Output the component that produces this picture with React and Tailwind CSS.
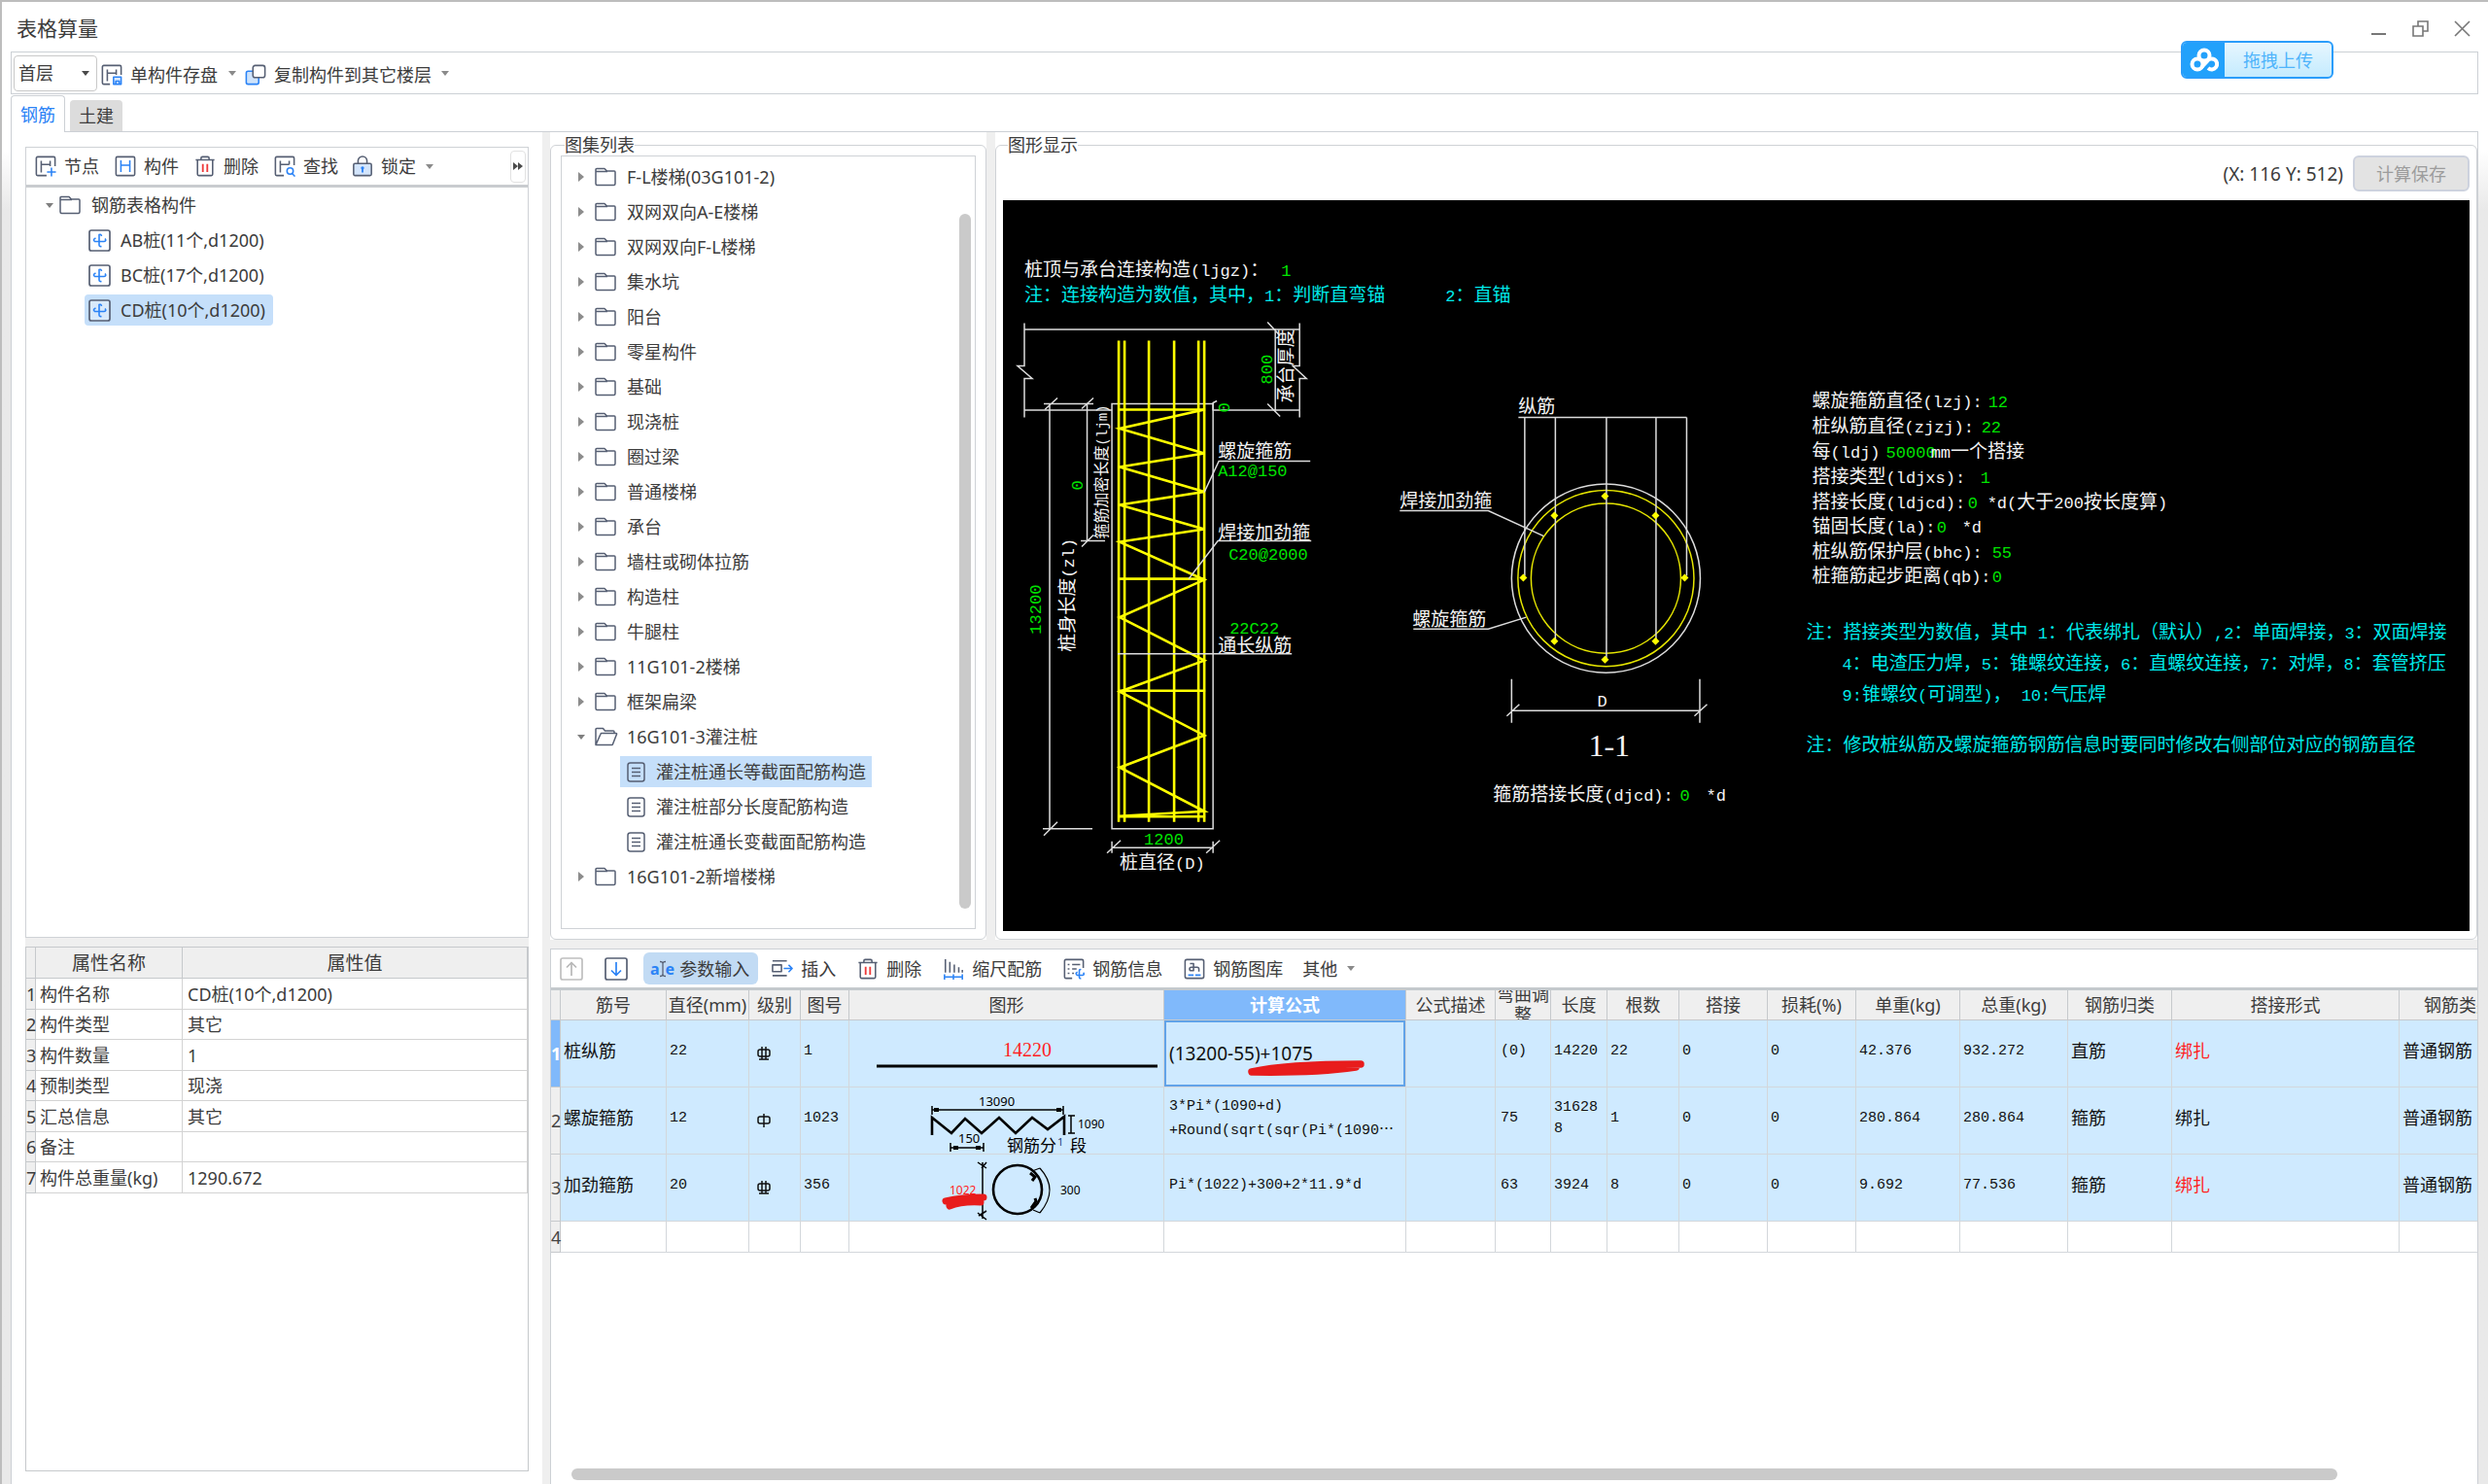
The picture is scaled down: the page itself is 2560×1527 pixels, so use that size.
import { useState } from 'react';

const SLATE = '#565f73';
const BLUE = '#2b83f6';

const atlas = [
  'F-L楼梯(03G101-2)',
  '双网双向A-E楼梯',
  '双网双向F-L楼梯',
  '集水坑',
  '阳台',
  '零星构件',
  '基础',
  '现浇桩',
  '圈过梁',
  '普通楼梯',
  '承台',
  '墙柱或砌体拉筋',
  '构造柱',
  '牛腿柱',
  '11G101-2楼梯',
  '框架扁梁',
  {
    name: '16G101-3灌注桩',
    items: ['灌注桩通长等截面配筋构造', '灌注桩部分长度配筋构造', '灌注桩通长变截面配筋构造']
  },
  '16G101-2新增楼梯'
];

const components = ['AB桩(11个,d1200)', 'BC桩(17个,d1200)', 'CD桩(10个,d1200)'];

const properties = [
  ['构件名称', 'CD桩(10个,d1200)'],
  ['构件类型', '其它'],
  ['构件数量', '1'],
  ['预制类型', '现浇'],
  ['汇总信息', '其它'],
  ['备注', ''],
  ['构件总重量(kg)', '1290.672']
];

const columns = [
  ['', 10],
  ['筋号', 109],
  ['直径(mm)', 85],
  ['级别', 53],
  ['图号', 50],
  ['图形', 324],
  ['计算公式', 249],
  ['公式描述', 92],
  ['弯曲调整', 57],
  ['长度', 58],
  ['根数', 74],
  ['搭接', 91],
  ['损耗(%)', 91],
  ['单重(kg)', 107],
  ['总重(kg)', 111],
  ['钢筋归类', 107],
  ['搭接形式', 234],
  ['钢筋类别', 123]
];

const bars = [
  {
    name: '桩纵筋', dia: '22', grade: 'C', shape: '1', bend: '(0)', length: '14220', count: '22',
    unit: '42.376', total: '932.272', kind: '直筋', lapRed: true
  },
  {
    name: '螺旋箍筋', dia: '12', grade: 'A', shape: '1023', bend: '75', length: '316288', count: '1',
    unit: '280.864', total: '280.864', kind: '箍筋', lapRed: false
  },
  {
    name: '加劲箍筋', dia: '20', grade: 'C', shape: '356', bend: '63', length: '3924', count: '8',
    unit: '9.692', total: '77.536', kind: '箍筋', lapRed: true
  }
];

function Icon({ children, w = 22, h = 22, box = '0 0 24 24' }) {
  return (
    <svg width={w} height={h} viewBox={box} fill="none" stroke={SLATE} strokeWidth="1.7" strokeLinejoin="round" className="shrink-0" aria-hidden="true">
      {children}
    </svg>
  );
}

function SaveIcon() {
  return (
    <Icon>
      <path d="M10 22.500H3a1.500 1.500 0 0 1-1.500-1.500V3A1.500 1.500 0 0 1 3 1.500h18A1.500 1.500 0 0 1 22.500 3v9" />
      <path d="M7 6v13M17 6v6M7 10h10" />
      <path d="M14 14.500h8.500v8H14z" stroke={BLUE} fill="#d6e8ff" />
      <path d="M16.500 22v-3h4v3" stroke={BLUE} />
    </Icon>
  );
}

function CopyIcon() {
  return (
    <Icon>
      <rect x="1.500" y="8" width="14" height="14.500" rx="2" stroke={BLUE} fill="#cfe3fb" />
      <rect x="9" y="1.500" width="13.500" height="13.500" rx="2.500" fill="#fff" />
    </Icon>
  );
}

function NodeIcon() {
  return (
    <Icon>
      <path d="M13 22.500H3a1.500 1.500 0 0 1-1.500-1.500V3A1.500 1.500 0 0 1 3 1.500h18A1.500 1.500 0 0 1 22.500 3v9" />
      <path d="M7 6v13M17 6v6M7 10h10" />
      <path d="M18.500 13.500v10M13.500 18.500h10" stroke={BLUE} />
    </Icon>
  );
}

function MemberIcon() {
  return (
    <Icon>
      <rect x="1.500" y="1.500" width="21" height="21" rx="1.500" />
      <path d="M7 5.500v13M17 5.500v13M7 11h10" stroke={BLUE} />
    </Icon>
  );
}

function TrashIcon() {
  return (
    <Icon>
      <path d="M1.500 5h21M7.500 5V3A1.500 1.500 0 0 1 9 1.500h6A1.500 1.500 0 0 1 16.500 3v2M3.500 5v16A1.500 1.500 0 0 0 5 22.500h14a1.500 1.500 0 0 0 1.500-1.500V5" />
      <path d="M9.500 9.500v9M14.500 9.500v9" stroke="#ee3b3b" strokeWidth="2" />
    </Icon>
  );
}

function FindIcon() {
  return (
    <Icon>
      <path d="M11 22.500H3a1.500 1.500 0 0 1-1.500-1.500V3A1.500 1.500 0 0 1 3 1.500h18A1.500 1.500 0 0 1 22.500 3v8" />
      <path d="M7 6v13M17 6v4M7 10h10" />
      <circle cx="18" cy="17.500" r="3.500" stroke={BLUE} />
      <path d="M20.500 20.500l3 3" stroke={BLUE} />
    </Icon>
  );
}

function LockIcon() {
  return (
    <Icon>
      <path d="M7 9V6a5 5 0 0 1 10 0v3" />
      <rect x="2" y="9" width="20" height="13.500" rx="1.500" fill="#d3e5fc" />
      <path d="M12 14v5" stroke={BLUE} strokeWidth="2" />
      <circle cx="12" cy="14" r="1.800" fill={BLUE} stroke="none" />
    </Icon>
  );
}

function FolderIcon() {
  return (
    <Icon w={22} h={20} box="0 0 22 20">
      <path d="M1 4V2.500A1 1 0 0 1 2 1.500h8l2.500 2.500H20a1 1 0 0 1 1 1V17a1.500 1.500 0 0 1-1.500 1.500h-17A1.500 1.500 0 0 1 1 17zM1 4.500h12" strokeWidth="1.500" />
    </Icon>
  );
}

function OpenFolderIcon() {
  return (
    <Icon w={24} h={20} box="0 0 24 20">
      <path d="M1 18V2.500a1 1 0 0 1 1-1h6.500L10.500 4H19a1 1 0 0 1 1 1v1.500M1 18.500h16.500a1 1 0 0 0 1-.7L22.500 7.500a.7.7 0 0 0-.7-1H7a1 1 0 0 0-1 .7z" strokeWidth="1.500" />
    </Icon>
  );
}

function DocIcon() {
  return (
    <Icon w={19} h={21} box="0 0 19 21">
      <rect x="1" y="1" width="17" height="19" rx="2.500" strokeWidth="1.500" />
      <path d="M5 6.500h9M5 10.500h9M5 14.500h9" strokeWidth="1.500" />
    </Icon>
  );
}

function BarIcon() {
  return (
    <Icon w={23} h={23} box="0 0 23 23">
      <rect x="1" y="1" width="21" height="21" rx="2" fill="#fff" fillOpacity=".35" />
      <path d="M13.500 7q-.5-2.500-2.500-1.500v10.500q0 2 2.500 1.500" stroke={BLUE} strokeWidth="1.600" />
      <path d="M7.500 9q-3.500 1.500-1 3.500h9.500q3-.5 1-3" stroke={BLUE} strokeWidth="1.600" />
    </Icon>
  );
}

function ArrowBoxIcon({ down }) {
  return (
    <Icon w={24} h={24}>
      <rect x="1" y="1" width="22" height="22" rx="2" stroke={down ? SLATE : '#bfbfbf'} />
      <path d={down ? 'M12 5v13M7 13.500l5 5 5-5' : 'M12 19V6M7 10.500l5-5 5 5'} stroke={down ? BLUE : '#b8b8b8'} />
    </Icon>
  );
}

function InsertIcon() {
  return (
    <Icon>
      <path d="M1 3h16M1 19.500h16M1 7.500h10v7.500H1z" />
      <path d="M13.500 11.500h9M19 7.500l4 4-4 4" stroke={BLUE} />
    </Icon>
  );
}

function ScaleIcon() {
  return (
    <Icon>
      <path d="M3 1v15M8 4v12M13 7v9M18 10v6M22 13v3" />
      <path d="M2 21h20M2 18v6M12 18v6M22 18v6" stroke={BLUE} />
    </Icon>
  );
}

function InfoIcon() {
  return (
    <Icon>
      <path d="M10 22.500H3A1.500 1.500 0 0 1 1.500 21V3A1.500 1.500 0 0 1 3 1.500h18A1.500 1.500 0 0 1 22.500 3v8" />
      <path d="M5 7h2M10 7h9M5 12h2M10 12h5M5 17h2M10 17h2" />
      <path d="M20 13q-2-1-2 1v7q0 2 2 1.500M16 15.500q-3 1.500-.5 3.500h6q3-.5 1-3" stroke={BLUE} />
    </Icon>
  );
}

function LibraryIcon() {
  return (
    <Icon>
      <rect x="1.500" y="1.500" width="21" height="21" rx="2" />
      <path d="M7 6h4v8H8.500a2 2 0 0 1 0-4H15a2 2 0 0 1 2 2v3" />
      <path d="M5 19h6M13 19h6" stroke={BLUE} strokeWidth="2" />
    </Icon>
  );
}

function Caret({ className = 'border-t-[#8a8a8a]' }) {
  return <span className={`inline-block border-x-4 border-t-5 border-x-transparent ${className}`} />;
}

function ToolButton({ icon, label, className = '' }) {
  return (
    <button type="button" className={`flex items-center gap-2 whitespace-nowrap ${className}`}>
      {icon}
      <span>{label}</span>
    </button>
  );
}

// Half-width runs are set in the monospace face, the rest in the CJK face
function CadText({ x, y, fill = '#f4f4f4', rotate, small, children }) {
  const runs = children.match(/[\x20-\x7e]+|[^\x20-\x7e]+/g);
  return (
    <text
      x={x}
      y={y}
      fill={fill}
      transform={rotate ? `rotate(-90 ${x} ${y})` : undefined}
      className={`whitespace-pre font-['Noto_Sans_CJK_SC',sans-serif] ${small ? 'text-[16px]' : 'text-[19px]'}`}
    >
      {runs.map((run, i) =>
        /^[\x20-\x7e]/.test(run) ? (
          <tspan key={i} className={`font-['Liberation_Mono',monospace] ${small ? 'text-[14px]' : 'text-[17px]'}`}>{run}</tspan>
        ) : (
          <tspan key={i}>{run}</tspan>
        )
      )}
    </text>
  );
}

const GREEN = '#00e400';
const CYAN = '#00eaea';
const YELLOW = '#ffff00';

function PileDrawing() {
  return (
    <svg viewBox="1032 207 1508 751" preserveAspectRatio="xMidYMid meet" className="min-h-0 w-full flex-1 bg-black" role="img" aria-label="图形显示">
      <CadText x={1054} y={285}>桩顶与承台连接构造(ljgz)：</CadText>
      <CadText x={1318} y={285} fill={GREEN}>1</CadText>
      <CadText x={1054} y={311} fill={CYAN}>注：连接构造为数值，其中，1：判断直弯锚</CadText>
      <CadText x={1487} y={311} fill={CYAN}>2：直锚</CadText>

      <g fill="none" stroke="#dcdcdc" strokeWidth="1.500">
        <path d="M1054 333v44h-7l15 13h-8v40M1337 333v44h-7l14 13h-7v40M1054 339.500h283M1054 422.500h90M1248 422.500h89" />
        <path d="M1312 339v84M1304 332l13 14M1304 416l13 13" />
        <path d="M1144 416h104v437h-104z" />
        <path d="M1074 416h51M1080 416v437M1073 853h51M1075 422l13-12M1074 860l14-14" />
        <path d="M1118.500 416v141M1112 557h25M1113 421l12-11M1113 563l12-12M1248 423v-8l4-2" />
        <path d="M1144 872.500h104M1144 866v12M1248 866v12M1139 878l14-13M1241 878l14-13" />
      </g>

      <g fill="none" stroke={YELLOW} strokeWidth="2.600">
        <path d="M1151 351v495M1157 351v495M1182 351v495M1208 351v495M1233 351v495M1239 351v495" />
        <path d="M1150 422h90M1150 596h90M1150 711h90M1150 840.500h90" />
        <path d="M1239 422L1152 441.500 1239 467 1152 481 1239 506.500 1152 520 1239 545 1152 558 1239 597 1152 635.500 1239 680 1152 712 1239 757 1152 790 1239 835 1152 840" />
      </g>

      <g fill="none" stroke="#dcdcdc" strokeWidth="1.500">
        <path d="M1348 475h-94l-15 32M1349 557h-96l-30 39M1150 673h179" />
      </g>

      <CadText x={1309} y={396} fill={GREEN} rotate>800</CadText>
      <CadText x={1330} y={415} rotate>承台厚度</CadText>
      <CadText x={1114} y={505} fill={GREEN} rotate>0</CadText>
      <CadText x={1139} y={555} rotate small>箍筋加密长度(ljm)</CadText>
      <CadText x={1105} y={671} rotate>桩身长度(zl)</CadText>
      <CadText x={1071} y={653} fill={GREEN} rotate>13200</CadText>
      <CadText x={1265} y={425} fill={GREEN} rotate>0</CadText>
      <CadText x={1253} y={471}>螺旋箍筋</CadText>
      <CadText x={1253} y={490} fill={GREEN}>A12@150</CadText>
      <CadText x={1253} y={555}>焊接加劲箍</CadText>
      <CadText x={1264} y={576} fill={GREEN}>C20@2000</CadText>
      <CadText x={1265} y={652} fill={GREEN}>22C22</CadText>
      <CadText x={1253} y={671}>通长纵筋</CadText>
      <CadText x={1177} y={869} fill={GREEN}>1200</CadText>
      <CadText x={1152} y={894}>桩直径(D)</CadText>

      <g fill="none" strokeWidth="1.500">
        <circle cx="1652" cy="595.500" r="97" stroke="#dcdcdc" />
        <circle cx="1652" cy="595.500" r="90.500" stroke="#e6e600" />
        <circle cx="1652" cy="595.500" r="77" stroke="#e6e600" />
        <path
          d="M1562 430h173M1568.500 430v163M1600 430v229M1652.500 430v248M1703.500 430v229M1735 430v163M1440 526h91l57 26M1454 647.500h77l39-12"
          stroke="#dcdcdc"
        />
        <path d="M1555 699v45M1748.500 699v45M1555 731.500h193M1550 737l13-12M1743 737l13-12" stroke="#dcdcdc" />
      </g>
      <g fill={YELLOW}>
        {[[1651, 511], [1599, 531], [1703, 531], [1567, 595], [1733, 595], [1599, 660], [1703, 660], [1651, 679]].map(([x, y]) => (
          <path key={`${x}-${y}`} d={`M${x - 4} ${y}l4-4 4 4-4 4z`} />
        ))}
      </g>
      <CadText x={1562} y={426}>纵筋</CadText>
      <CadText x={1440} y={522}>焊接加劲箍</CadText>
      <CadText x={1453} y={644}>螺旋箍筋</CadText>
      <CadText x={1643} y={727}>D</CadText>
      <text x="1634" y="778" fill="#f4f4f4" className="font-['Liberation_Serif',serif] text-[32px]">1-1</text>
      <CadText x={1536} y={824}>箍筋搭接长度(djcd):</CadText>
      <CadText x={1728} y={824} fill={GREEN}>0</CadText>
      <CadText x={1755} y={824}>*d</CadText>

      <CadText x={1864} y={420}>螺旋箍筋直径(lzj):</CadText>
      <CadText x={2045} y={420} fill={GREEN}>12</CadText>
      <CadText x={1864} y={446}>桩纵筋直径(zjzj):</CadText>
      <CadText x={2038} y={446} fill={GREEN}>22</CadText>
      <CadText x={1864} y={471}>每(ldj)</CadText>
      <CadText x={1940} y={471} fill={GREEN}>50000</CadText>
      <CadText x={1986} y={471}>mm一个搭接</CadText>
      <CadText x={1864} y={497}>搭接类型(ldjxs):</CadText>
      <CadText x={2037} y={497} fill={GREEN}>1</CadText>
      <CadText x={1864} y={523}>搭接长度(ldjcd):</CadText>
      <CadText x={2024} y={523} fill={GREEN}>0</CadText>
      <CadText x={2044} y={523}>*d(大于200按长度算)</CadText>
      <CadText x={1864} y={548}>锚固长度(la):</CadText>
      <CadText x={1992} y={548} fill={GREEN}>0</CadText>
      <CadText x={2018} y={548}>*d</CadText>
      <CadText x={1864} y={574}>桩纵筋保护层(bhc):</CadText>
      <CadText x={2049} y={574} fill={GREEN}>55</CadText>
      <CadText x={1864} y={599}>桩箍筋起步距离(qb):</CadText>
      <CadText x={2049} y={599} fill={GREEN}>0</CadText>

      <CadText x={1858} y={657} fill={CYAN}>注：搭接类型为数值，其中 1：代表绑扎（默认）,2：单面焊接，3：双面焊接</CadText>
      <CadText x={1895} y={689} fill={CYAN}>4：电渣压力焊，5：锥螺纹连接，6：直螺纹连接，7：对焊，8：套管挤压</CadText>
      <CadText x={1895} y={721} fill={CYAN}>9:锥螺纹(可调型)， 10:气压焊</CadText>
      <CadText x={1858} y={773} fill={CYAN}>注：修改桩纵筋及螺旋箍筋钢筋信息时要同时修改右侧部位对应的钢筋直径</CadText>
    </svg>
  );
}

function GradeMark({ grade }) {
  return (
    <svg width="16" height="16" viewBox="0 0 16 16" fill="none" stroke="#111" strokeWidth="1.500" role="img" aria-label={grade}>
      <rect x="2" y="4" width="12" height="7" rx="2" />
      {grade === 'A' ? <path d="M8 1v14" /> : <path d="M6 1v13M10 1v13M3 14h10" />}
    </svg>
  );
}

function ShapeLine() {
  return (
    <svg width="323" height="68" viewBox="0 0 323 68" className="block">
      <text x="158" y="37" fill="#ff1e1e" className="font-['Liberation_Serif',serif] text-[20px]">14220</text>
      <path d="M28 47h289" stroke="#000" strokeWidth="3" />
    </svg>
  );
}

function ShapeSpiral() {
  return (
    <svg width="323" height="68" viewBox="0 0 323 68" className="block font-['Noto_Sans',sans-serif] text-[13px]">
      <g fill="none" stroke="#000" strokeWidth="1.500">
        <path d="M85 23h135M85 19v9M220 19v9M228 29v18M225 29h7M225 47h7M104 62h34M104 57v9M138 57v9" />
        <path d="M85 49V31l20 16 14-15 17 15 18-16 17 16 17-16 16 12 17-13v19" strokeWidth="2.600" />
      </g>
      <path d="M87 21h5v4h-5zM213 21h5v4h-5zM107 60h5v4h-5zM130 60h5v4h-5z" />
      <text x="133" y="19">13090</text>
      <text x="235" y="42" className="text-[12px]">1090</text>
      <text x="112" y="57">150</text>
      <text x="162" y="66" className="font-['Noto_Sans_CJK_SC',sans-serif] text-[17px]">钢筋分</text>
      <text x="214" y="60" fill="#24407c" className="text-[11px]">1</text>
      <text x="227" y="66" className="font-['Noto_Sans_CJK_SC',sans-serif] text-[17px]">段</text>
    </svg>
  );
}

function ShapeRing() {
  return (
    <svg width="323" height="68" viewBox="0 0 323 68" className="block font-['Noto_Sans',sans-serif] text-[12px]">
      <path d="M137 8v58M132 8l9 6M141 8l-5 6M132 60l9 7M133 63l8-5" fill="none" stroke="#000" strokeWidth="1.500" />
      <circle cx="173" cy="36" r="25" fill="none" stroke="#000" strokeWidth="2.600" />
      <path d="M196 14q20 22 0 46M196 14l-8 3M196 60l-7-3" fill="none" stroke="#000" strokeWidth="1.200" />
      <path d="M186 19l5 4-3 4M187 55l5-7-1-3" fill="none" stroke="#000" strokeWidth="3" />
      <text x="103" y="41" fill="#ff1e1e">1022</text>
      <text x="217" y="41">300</text>
      <path d="M99 48q16-4 39-4M103 53q12-5 32-4" fill="none" stroke="#e81c1c" strokeWidth="7" strokeLinecap="round" />
    </svg>
  );
}

const shapes = [<ShapeLine key="line" />, <ShapeSpiral key="spiral" />, <ShapeRing key="ring" />];

function Formula({ row }) {
  if (row === 0) {
    return (
      <div className="relative flex h-17 items-center border-2 border-[#62a3e8] pl-[3px] font-['Noto_Sans','Noto_Sans_CJK_SC',sans-serif] text-[19px]">
        (13200-55)+1075
        <svg width="122" height="18" viewBox="0 0 122 18" className="absolute top-[38px] left-[83px]" aria-hidden="true">
          <path d="M5 13Q40 5 117 5M7 13Q70 14 112 8" fill="none" stroke="#e81c1c" strokeWidth="7.500" strokeLinecap="round" />
        </svg>
      </div>
    );
  }
  if (row === 1) {
    return (
      <div className="pb-1 pl-[5px] leading-[22px]">
        3*Pi*(1090+d)
        <br />
        +Round(sqrt(sqr(Pi*(1090<span className="font-['Noto_Sans_CJK_SC',sans-serif]" lang="zh-CN">…</span>
      </div>
    );
  }
  return <div className="pb-1 pl-[5px]">Pi*(1022)+300+2*11.9*d</div>;
}

function BarTable() {
  const cell = 'border-r border-b border-[#d3d7db] pb-1 pl-[3px]';
  const cjk = "pb-2 font-['Noto_Sans_CJK_SC',sans-serif] text-[18px] whitespace-nowrap";
  return (
    <table className="w-[2025px] table-fixed border-separate border-spacing-0 text-left">
      <colgroup>
        {columns.map(([name, width]) => (
          <col key={name} style={{ width }} />
        ))}
      </colgroup>
      <thead>
        <tr className="h-[31px]">
          {columns.map(([name], i) => (
            <th
              key={name}
              className={`h-[31px] border-r border-b border-[#c6c9cc] p-0 text-center ${
                i === 6 ? 'bg-[#80b9fb] font-bold text-white' : 'bg-[#efefef] font-normal'
              }`}
            >
              <div className="flex h-[30px] items-center justify-center overflow-hidden leading-[21px]">{name}</div>
            </th>
          ))}
        </tr>
      </thead>
      <tbody className="font-['Liberation_Mono',monospace] text-[15px] text-[#111]">
        {bars.map((bar, i) => (
          <tr key={bar.name} className="h-[69px] bg-[#cfeaff]">
            <th
              scope="row"
              className={`border-r border-b border-[#c6c9cc] p-0 font-['Noto_Sans',sans-serif] text-[18px] ${
                i === 0 ? 'bg-[#80b9fb] font-bold text-white' : 'bg-[#efefef] font-normal text-[#444]'
              }`}
            >
              {i + 1}
            </th>
            <td className={`${cell} ${cjk}`}>{bar.name}</td>
            <td className={cell}>{bar.dia}</td>
            <td className={`${cell} pt-1`}>
              <div className="pl-1"><GradeMark grade={bar.grade} /></div>
            </td>
            <td className={cell}>{bar.shape}</td>
            <td className="border-r border-b border-[#d3d7db] p-0">{shapes[i]}</td>
            <td className="border-r border-b border-[#d3d7db] p-0"><Formula row={i} /></td>
            <td className={cell} />
            <td className={`${cell} pl-[5px]`}>{bar.bend}</td>
            <td className={`${cell} pr-2 leading-[22px] break-all`}>{bar.length}</td>
            <td className={cell}>{bar.count}</td>
            <td className={cell}>0</td>
            <td className={cell}>0</td>
            <td className={cell}>{bar.unit}</td>
            <td className={cell}>{bar.total}</td>
            <td className={`${cell} ${cjk}`}>{bar.kind}</td>
            <td className={`${cell} ${cjk} ${bar.lapRed ? 'text-[#ff1e1e]' : ''}`}>绑扎</td>
            <td className={`${cell} ${cjk}`}>普通钢筋</td>
          </tr>
        ))}
        <tr className="h-8 bg-white">
          <th scope="row" className="border-r border-b border-[#c6c9cc] bg-[#efefef] p-0 font-['Noto_Sans',sans-serif] text-[18px] font-normal text-[#444]">4</th>
          {columns.slice(1).map(([name]) => (
            <td key={name} className={cell} />
          ))}
        </tr>
      </tbody>
    </table>
  );
}

function AtlasTree() {
  const [selected, setSelected] = useState('灌注桩通长等截面配筋构造');
  return (
    <ul className="min-w-0 flex-1 pt-[3px] pl-[17px]">
      {atlas.map((entry) => {
        const name = entry.name || entry;
        return (
          <li key={name}>
            <button type="button" className="flex h-9 items-center">
              <span className="flex w-[17px] shrink-0">
                {entry.items ? (
                  <Caret className="-ml-px border-t-[#7f7f7f]" />
                ) : (
                  <span className="border-y-5 border-l-6 border-y-transparent border-l-[#8c8c8c]" />
                )}
              </span>
              <span className="flex w-[33px]">{entry.items ? <OpenFolderIcon /> : <FolderIcon />}</span>
              {name}
            </button>
            {entry.items && (
              <ul className="pl-[43px]">
                {entry.items.map((item) => (
                  <li key={item} className="flex h-9 items-center">
                    <button
                      type="button"
                      onClick={() => setSelected(item)}
                      className={`flex h-8 items-center gap-[11px] pr-[6px] pl-[7px] ${item === selected ? 'bg-[#c5dffa]' : ''}`}
                    >
                      <DocIcon />
                      {item}
                    </button>
                  </li>
                ))}
              </ul>
            )}
          </li>
        );
      })}
    </ul>
  );
}

function ComponentPanel() {
  const [selected, setSelected] = useState(components[2]);
  return (
    <section className="flex min-h-0 flex-[815] flex-col border border-[#cfd2d6]">
      <div className="flex h-[41px] shrink-0 items-center border-b-3 border-[#c9cccf] pr-[2px] pl-[9px]">
        <ToolButton icon={<NodeIcon />} label="节点" className="mr-4" />
        <ToolButton icon={<MemberIcon />} label="构件" className="mr-4" />
        <ToolButton icon={<TrashIcon />} label="删除" className="mr-4" />
        <ToolButton icon={<FindIcon />} label="查找" className="mr-[14px]" />
        <ToolButton icon={<LockIcon />} label="锁定" className="mr-[10px]" />
        <Caret />
        <button type="button" aria-label="更多" className="ml-auto flex h-[33px] w-4 items-center justify-center rounded-sm border border-[#e2e2e2]">
          <span className="border-y-4 border-l-5 border-y-transparent border-l-[#4a4a4a]" />
          <span className="border-y-4 border-l-5 border-y-transparent border-l-[#4a4a4a]" />
        </button>
      </div>
      <ul className="pl-5">
        <li>
          <button type="button" className="flex h-9 items-center">
            <Caret className="mr-[6px] border-t-[#7f7f7f]" />
            <span className="flex w-[33px]"><FolderIcon /></span>
            钢筋表格构件
          </button>
          <ul className="pl-10">
            {components.map((item) => (
              <li key={item} className="flex h-9 items-center">
                <button
                  type="button"
                  onClick={() => setSelected(item)}
                  className={`flex h-8 items-center gap-[10px] rounded-sm pr-2 pl-1 ${item === selected ? 'bg-[#c5dffa]' : ''}`}
                >
                  <BarIcon />
                  {item}
                </button>
              </li>
            ))}
          </ul>
        </li>
      </ul>
    </section>
  );
}

function PropertyPanel() {
  return (
    <section className="min-h-0 flex-[540] border border-[#c6c9cc]">
      <table className="w-full table-fixed border-separate border-spacing-0 text-left">
        <colgroup>
          <col className="w-[10px]" />
          <col className="w-[151px]" />
          <col />
        </colgroup>
        <thead>
          <tr className="h-8 bg-[#efefef]">
            <th className="border-r border-b border-[#c6c9cc] p-0" />
            <th className="border-r border-b border-[#c6c9cc] p-0 text-center text-[19px] font-normal">属性名称</th>
            <th className="border-r border-b border-[#c6c9cc] p-0 text-center text-[19px] font-normal">属性值</th>
          </tr>
        </thead>
        <tbody>
          {properties.map(([name, value], i) => (
            <tr key={name} className="h-[31px] odd:h-8">
              <th scope="row" className="border-r border-b border-[#c6c9cc] bg-[#efefef] p-0 font-normal">{i + 1}</th>
              <td className="border-r border-b border-[#d3d3d3] p-0 pl-1">{name}</td>
              <td className="border-r border-b border-[#d3d3d3] p-0 pl-[5px]">{value}</td>
            </tr>
          ))}
        </tbody>
      </table>
    </section>
  );
}

export default function App() {
  const [floor, setFloor] = useState('首层');

  return (
    <div className="relative flex h-screen flex-col overflow-hidden border-t-2 border-l-2 border-[#bdbdbd] bg-linear-to-b from-white from-10% to-[#e9e9e9] to-14% pr-[10px] pl-[9px] font-['Noto_Sans','Noto_Sans_CJK_SC',sans-serif] text-[18px] leading-6 text-[#3c3c3c]">
      <span className="absolute -top-[2px] left-[43%] h-[2px] w-[72px] bg-[#1f78d8]" />

      <header className="flex h-[51px] shrink-0 items-center pt-[3px] pl-[6px]">
        <h1 className="text-[21px]">表格算量</h1>
        <div className="ml-auto flex items-center gap-[26px] pr-[8px]">
          <button type="button" aria-label="最小化">
            <svg width="17" height="17" viewBox="0 0 17 17" fill="none" stroke="#777" strokeWidth="2"><path d="M1 14h15" /></svg>
          </button>
          <button type="button" aria-label="还原">
            <svg width="17" height="17" viewBox="0 0 17 17" fill="none" stroke="#777" strokeWidth="1.600"><path d="M1 6h10v10H1zM6 6V1h10v10h-5" /></svg>
          </button>
          <button type="button" aria-label="关闭">
            <svg width="17" height="17" viewBox="0 0 17 17" fill="none" stroke="#777" strokeWidth="1.600"><path d="M1 1l15 15M16 1L1 16" /></svg>
          </button>
        </div>
      </header>

      <div className="flex h-11 shrink-0 items-center border border-[#ccd0d5] bg-white pl-[2px]">
        <div className="relative mr-1 flex">
          <select
            aria-label="楼层"
            value={floor}
            onChange={(e) => setFloor(e.target.value)}
            className="h-[37px] w-[86px] appearance-none rounded-sm border border-[#c9c9c9] bg-white pl-1"
          >
            <option>首层</option>
          </select>
          <Caret className="pointer-events-none absolute top-4 right-2 border-t-[#4a4a4a]" />
        </div>
        <ToolButton icon={<SaveIcon />} label="单构件存盘" className="mr-[11px] pt-[3px]" />
        <Caret className="mr-[9px] border-t-[#8a8a8a]" />
        <ToolButton icon={<CopyIcon />} label="复制构件到其它楼层" className="mr-[10px] pt-[3px]" />
        <Caret />
      </div>

      <button type="button" className="absolute top-10 right-[159px] flex h-[39px] w-[157px] overflow-hidden rounded-md border-2 border-[#2a9dfb] bg-linear-to-b from-[#e6f6fe] to-[#c4ebfe] text-[#4fb4fb]">
        <span className="flex h-full w-[43px] items-center justify-center bg-[#22a1fb]">
          <svg width="30" height="26" viewBox="0 0 30 26" fill="none" stroke="#fff" strokeWidth="4" aria-hidden="true">
            <circle cx="15" cy="8" r="5.500" />
            <circle cx="8" cy="17" r="5.500" />
            <path d="M12 20.500l6-6.500a5.500 5.500 0 1 1 1 7" />
          </svg>
        </span>
        <span className="flex h-full flex-1 items-center justify-center">拖拽上传</span>
      </button>

      <nav className="flex h-[38px] shrink-0 items-end gap-[5px]">
        <button type="button" className="relative top-px h-[38px] w-14 rounded-t-sm border border-b-0 border-[#ccd0d5] bg-white text-[#2b83f6]">钢筋</button>
        <button type="button" className="h-8 w-[54px] rounded-t-sm bg-[#dcdcdc]">土建</button>
      </nav>

      <main className="flex min-h-0 flex-1 border border-b-0 border-[#ccd0d5] bg-white">
        <div className="flex w-[546px] shrink-0 flex-col px-[14px] pt-[15px] pb-[13px]">
          <ComponentPanel />
          <div className="h-[9px] shrink-0 bg-[#efefef]" />
          <PropertyPanel />
        </div>

        <div className="w-2 shrink-0 bg-[#efefef]" />

        <div className="flex min-w-0 flex-1 flex-col">
          <div className="flex min-h-0 flex-[831] pt-[2px]">
            <fieldset className="flex w-[449px] shrink-0 flex-col rounded-md border border-[#cfd2d6] px-[10px] pb-[10px]">
              <legend className="ml-1 leading-[22px]">图集列表</legend>
              <div className="flex min-h-0 flex-1 border border-[#cfd2d6]">
                <AtlasTree />
                <div className="mt-[59px] mr-1 mb-5 w-3 rounded-full bg-[#cacaca]" />
              </div>
            </fieldset>
            <div className="-mt-[2px] w-[9px] shrink-0 bg-[#efefef]" />
            <fieldset className="flex min-w-0 flex-1 flex-col rounded-md border border-[#cfd2d6] px-[7px] pb-2">
              <legend className="ml-[5px] leading-[22px]">图形显示</legend>
              <div className="mb-[9px] flex shrink-0 items-center justify-end gap-[10px]">
                <output className="text-[19px]">(X: 116 Y: 512)</output>
                <button type="button" disabled className="h-[37px] w-[120px] rounded-md border-2 border-[#cdd2de] bg-[#e3e3e3] text-[#9c9c9c]">计算保存</button>
              </div>
              <PileDrawing />
            </fieldset>
          </div>

          <div className="h-[9px] shrink-0 bg-[#efefef]" />

          <section className="flex min-h-0 flex-[551] flex-col border-t border-l border-[#ccd0d5]">
            <div className="flex h-[42px] shrink-0 items-center border-b-3 border-[#c4c9cd] pl-[9px]">
              <button type="button" aria-label="上移" className="mr-[22px]"><ArrowBoxIcon /></button>
              <button type="button" aria-label="下移" className="mr-4"><ArrowBoxIcon down /></button>
              <button type="button" className="mr-[14px] flex h-[33px] items-center gap-[5px] rounded-md bg-[#c2dbf4] pr-[9px] pl-[7px]">
                <span className="flex items-center text-[16px] font-bold text-[#2b83f6]">
                  a
                  <svg width="6" height="24" viewBox="0 0 8 24" fill="none" stroke={SLATE} strokeWidth="1.700" aria-hidden="true"><path d="M0 2q4 0 4 3v14q0 3-4 3M8 2q-4 0-4 3M8 22q-4 0-4-3" /></svg>
                  e
                </span>
                参数输入
              </button>
              <ToolButton icon={<InsertIcon />} label="插入" className="mr-[22px]" />
              <ToolButton icon={<TrashIcon />} label="删除" className="mr-[22px]" />
              <ToolButton icon={<ScaleIcon />} label="缩尺配筋" className="mr-[22px]" />
              <ToolButton icon={<InfoIcon />} label="钢筋信息" className="mr-[22px]" />
              <ToolButton icon={<LibraryIcon />} label="钢筋图库" className="mr-5" />
              <button type="button" className="flex items-center gap-[10px]">
                其他
                <Caret />
              </button>
            </div>
            <div className="min-h-0 flex-1 overflow-hidden">
              <BarTable />
            </div>
            <div className="mr-36 mb-1 ml-[21px] h-3 shrink-0 rounded-full bg-[#cacaca]" />
          </section>
        </div>
      </main>
    </div>
  );
}
